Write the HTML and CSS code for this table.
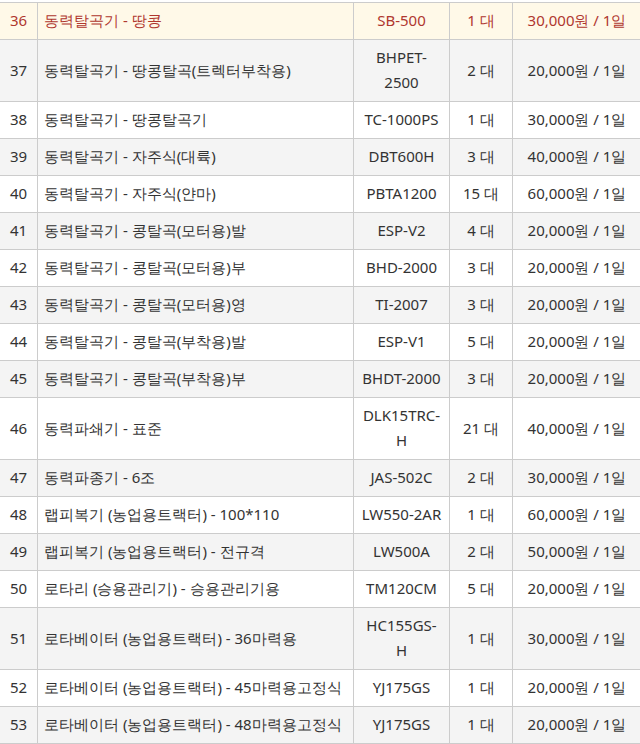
FILE: index.html
```html
<!DOCTYPE html>
<html lang="ko">
<head>
<meta charset="utf-8">
<link rel="stylesheet" href="styles.css">
</head>
<body>
<div class="wrap">
<table class="list">
<colgroup>
<col class="c-no"><col class="c-name"><col class="c-model"><col class="c-qty"><col class="c-price">
</colgroup>
<tbody>
<tr class="on"><td class="no">36</td><td class="name">동력탈곡기 - 땅콩</td><td>SB-500</td><td>1 대</td><td>30,000원 / 1일</td></tr>
<tr class="odd"><td class="no">37</td><td class="name">동력탈곡기 - 땅콩탈곡(트렉터부착용)</td><td>BHPET-2500</td><td>2 대</td><td>20,000원 / 1일</td></tr>
<tr><td class="no">38</td><td class="name">동력탈곡기 - 땅콩탈곡기</td><td class="keep">TC-1000PS</td><td>1 대</td><td>30,000원 / 1일</td></tr>
<tr class="odd"><td class="no">39</td><td class="name">동력탈곡기 - 자주식(대륙)</td><td>DBT600H</td><td>3 대</td><td>40,000원 / 1일</td></tr>
<tr><td class="no">40</td><td class="name">동력탈곡기 - 자주식(얀마)</td><td>PBTA1200</td><td>15 대</td><td>60,000원 / 1일</td></tr>
<tr class="odd"><td class="no">41</td><td class="name">동력탈곡기 - 콩탈곡(모터용)발</td><td>ESP-V2</td><td>4 대</td><td>20,000원 / 1일</td></tr>
<tr><td class="no">42</td><td class="name">동력탈곡기 - 콩탈곡(모터용)부</td><td>BHD-2000</td><td>3 대</td><td>20,000원 / 1일</td></tr>
<tr class="odd"><td class="no">43</td><td class="name">동력탈곡기 - 콩탈곡(모터용)영</td><td>TI-2007</td><td>3 대</td><td>20,000원 / 1일</td></tr>
<tr><td class="no">44</td><td class="name">동력탈곡기 - 콩탈곡(부착용)발</td><td>ESP-V1</td><td>5 대</td><td>20,000원 / 1일</td></tr>
<tr class="odd"><td class="no">45</td><td class="name">동력탈곡기 - 콩탈곡(부착용)부</td><td class="keep">BHDT-2000</td><td>3 대</td><td>20,000원 / 1일</td></tr>
<tr><td class="no">46</td><td class="name">동력파쇄기 - 표준</td><td>DLK15TRC-H</td><td>21 대</td><td>40,000원 / 1일</td></tr>
<tr class="odd"><td class="no">47</td><td class="name">동력파종기 - 6조</td><td>JAS-502C</td><td>2 대</td><td>30,000원 / 1일</td></tr>
<tr><td class="no">48</td><td class="name">랩피복기 (농업용트랙터) - 100*110</td><td class="keep">LW550-2AR</td><td>1 대</td><td>60,000원 / 1일</td></tr>
<tr class="odd"><td class="no">49</td><td class="name">랩피복기 (농업용트랙터) - 전규격</td><td>LW500A</td><td>2 대</td><td>50,000원 / 1일</td></tr>
<tr><td class="no">50</td><td class="name">로타리 (승용관리기) - 승용관리기용</td><td>TM120CM</td><td>5 대</td><td>20,000원 / 1일</td></tr>
<tr class="odd"><td class="no">51</td><td class="name">로타베이터 (농업용트랙터) - 36마력용</td><td>HC155GS-H</td><td>1 대</td><td>30,000원 / 1일</td></tr>
<tr><td class="no">52</td><td class="name">로타베이터 (농업용트랙터) - 45마력용고정식</td><td>YJ175GS</td><td>1 대</td><td>20,000원 / 1일</td></tr>
<tr class="odd"><td class="no">53</td><td class="name">로타베이터 (농업용트랙터) - 48마력용고정식</td><td>YJ175GS</td><td>1 대</td><td>20,000원 / 1일</td></tr>
</tbody>
</table>
</div>
</body>
</html>
```

FILE: styles.css
```css
html, body {
  margin: 0;
  padding: 0;
  background: #fff;
}
.wrap {
  overflow: hidden;
  width: 640px;
  padding-top: 2px;
}
.list {
  border-collapse: collapse;
  table-layout: fixed;
  width: 642px;
  margin-left: -1px;
  font-family: "Noto Sans", sans-serif;
  font-size: 15px;
  line-height: 25px;
  color: #333;
}
.c-no { width: 38px; }
.c-name { width: 316px; }
.c-model { width: 96px; }
.c-qty { width: 63px; }
.c-price { width: 129px; }
.list td {
  border: 1px solid #cccccc;
  padding: 5px 8px 6px;
  text-align: center;
  vertical-align: middle;
}
.list td.keep {
  white-space: nowrap;
  padding-left: 4px;
  padding-right: 4px;
}
.list td.no {
  padding-left: 2px;
  padding-right: 2px;
}
.list td.name {
  text-align: left;
  padding-left: 6px;
}
.list tr.odd td {
  background: #f4f4f4;
}
.list tr.on td {
  background: #fff9e8;
  color: #b0372f;
}
```
